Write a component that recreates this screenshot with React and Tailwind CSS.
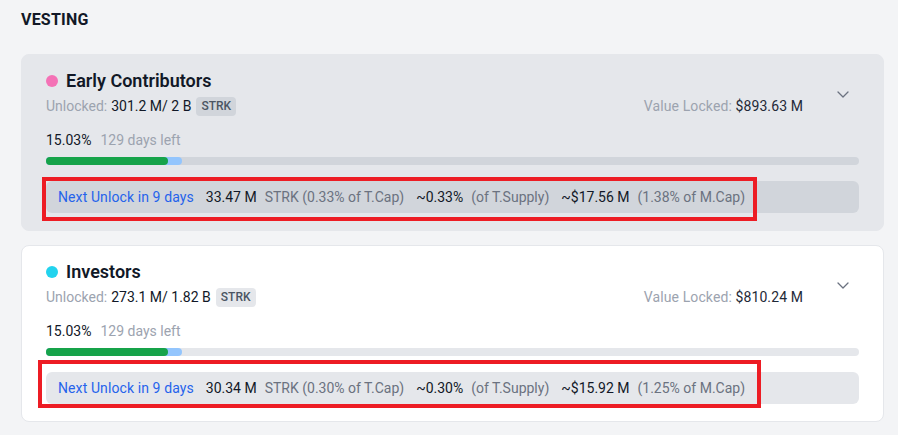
import React from "react";

const schedules = [
  {
    name: "Early Contributors",
    dot: "bg-[#f472b6]",
    unlocked: "301.2 M",
    total: "2 B",
    valueLocked: "$893.63 M",
    pct: "15.03%",
    daysLeft: "129 days left",
    nextAmount: "33.47 M",
    tcap: "0.33%",
    tsupply: "~0.33%",
    usd: "~$17.56 M",
    mcap: "1.38%",
    active: true,
    mark: "left-[20px] top-[122px] w-[715px] h-[44px]",
  },
  {
    name: "Investors",
    dot: "bg-[#22d3ee]",
    unlocked: "273.1 M",
    total: "1.82 B",
    valueLocked: "$810.24 M",
    pct: "15.03%",
    daysLeft: "129 days left",
    nextAmount: "30.34 M",
    tcap: "0.30%",
    tsupply: "~0.30%",
    usd: "~$15.92 M",
    mcap: "1.25%",
    active: false,
    mark: "left-[16px] top-[114px] w-[723px] h-[48px]",
  },
];

const Chevron = () => (
  <svg width="12" height="7" viewBox="0 0 12 7" fill="none">
    <polyline points="1,1 6,6 11,1" stroke="#6b7280" strokeWidth="1.3" strokeLinecap="round" strokeLinejoin="round" />
  </svg>
);

const VestingCard = ({ s }) => {
  const tone = s.active
    ? { card: "bg-[#e5e7eb] border-[#e5e7eb]", soft: "bg-[#d1d5db]" }
    : { card: "bg-white border-[#e5e7eb]", soft: "bg-[#e5e7eb]" };

  return (
    <div className={`relative rounded-lg border px-[24px] pt-[16px] pb-[17px] ${tone.card}`}>
      {/* entête */}
      <div className="flex items-start">
        <div className="flex-1">
          <div className="flex items-center gap-2 h-[20px]">
            <span className={`w-3 h-3 rounded-full ${s.dot}`}></span>
            <span className="text-[18px] font-semibold text-[#111827] leading-[20px]">{s.name}</span>
          </div>
          <div className="flex items-center mt-[3px] h-[24px] text-[14px]">
            <span className="text-[#9ca3af]">Unlocked:</span>
            <span className="ml-1 text-[#111827]">{s.unlocked}/ {s.total}</span>
            <span className={`ml-[5px] rounded px-[5px] h-[19px] flex items-center text-[12px] font-medium text-[#4b5563] ${tone.soft}`}>
              STRK
            </span>
          </div>
        </div>
        <div className="mt-[25px] text-[14px] leading-[20px] tracking-[0.1px]">
          <span className="text-[#9ca3af]">Value Locked: </span>
          <span className="text-[#1f2937]">{s.valueLocked}</span>
        </div>
        <div className="ml-[34px] mr-[10px] mt-[20px] w-[12px]">
          <Chevron />
        </div>
      </div>

      {/* progression */}
      <div className="mt-3 flex items-center gap-[9px] h-[20px] text-[14px]">
        <span className="text-[#111827]">{s.pct}</span>
        <span className="text-[#9ca3af]">{s.daysLeft}</span>
      </div>
      <div className={`relative mt-[7px] h-2 rounded-full ${tone.soft}`}>
        <div className="absolute left-0 top-0 h-2 w-[16.7%] rounded-full bg-[#93c5fd]"></div>
        <div className="absolute left-0 top-0 h-2 w-[15.03%] rounded-full bg-[#16a34a]"></div>
      </div>

      {/* prochain déblocage */}
      <div className={`mt-4 h-8 rounded-md px-3 flex items-center gap-3 text-[14px] whitespace-nowrap ${tone.soft}`}>
        <span className="text-[#2563eb] tracking-[0.1px]">Next Unlock in 9 days</span>
        <span className="flex gap-2">
          <span className="text-[#111827]">{s.nextAmount}</span>
          <span className="text-[#6b7280]">STRK ({s.tcap} of T.Cap)</span>
        </span>
        <span className="flex gap-2">
          <span className="text-[#111827]">{s.tsupply}</span>
          <span className="text-[#6b7280]">(of T.Supply)</span>
        </span>
        <span className="flex gap-2">
          <span className="text-[#111827]">{s.usd}</span>
          <span className="text-[#6b7280]">({s.mcap} of M.Cap)</span>
        </span>
      </div>

      {/* annotation */}
      <div className={`absolute border-4 border-[#ed1c24] pointer-events-none ${s.mark}`}></div>
    </div>
  );
};

export default function App() {
  return (
    <div className="min-h-screen bg-[#f3f4f6] pl-[21px] pr-[14px] pt-[8px] font-['Roboto',sans-serif] overflow-hidden h-[435px]">
      <h2 className="text-[16px] font-bold text-[#111827] leading-[24px] tracking-[0.2px]">VESTING</h2>
      <div className="mt-[22px] flex flex-col gap-[14px]">
        {schedules.map((s) => (
          <VestingCard key={s.name} s={s} />
        ))}
        <div className="h-[60px] rounded-lg border border-[#e5e7eb] bg-white"></div>
      </div>
    </div>
  );
}
